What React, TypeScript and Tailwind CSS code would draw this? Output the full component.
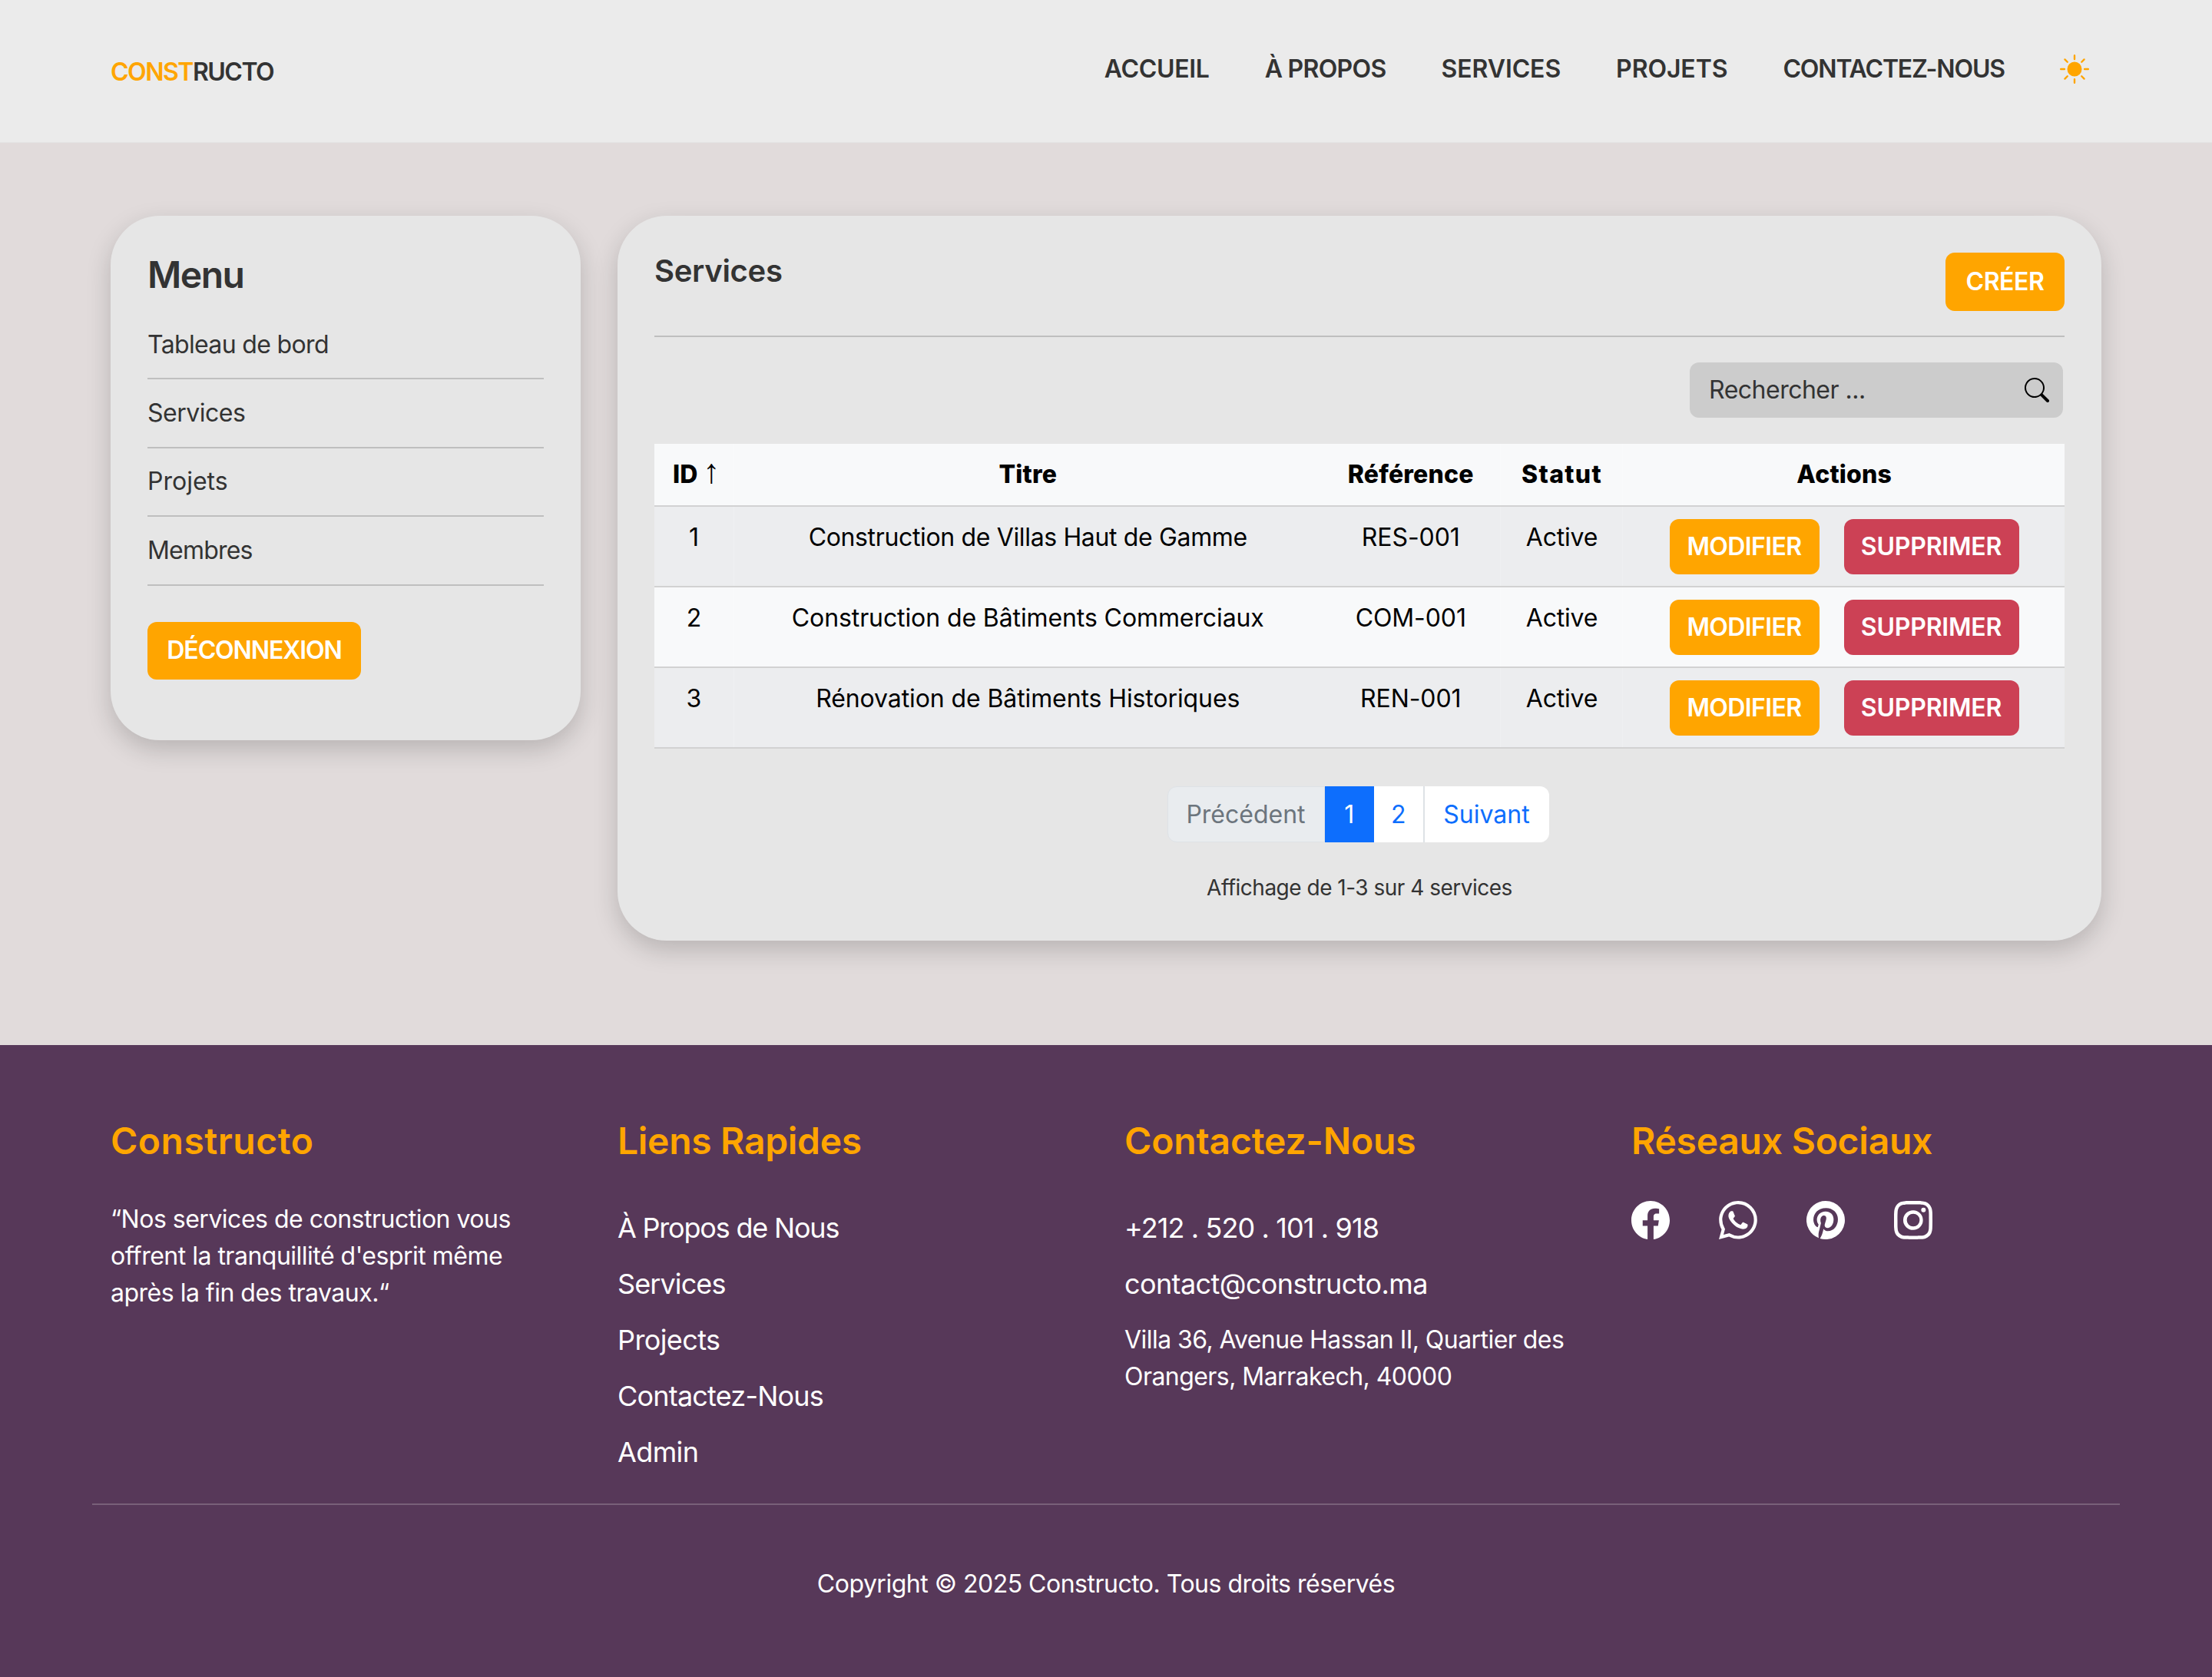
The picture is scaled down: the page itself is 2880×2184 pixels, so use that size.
import { BsFacebook, BsWhatsapp, BsPinterest, BsInstagram, BsSearch, BsSunFill } from "react-icons/bs";

const nav = [
  ["ACCUEIL", "tracking-[-0.3px]"],
  ["À PROPOS", "tracking-[-0.7px]"],
  ["SERVICES", "tracking-[-0.1px]"],
  ["PROJETS", "tracking-[-0.1px]"],
  ["CONTACTEZ-NOUS", "tracking-[-1.15px]"],
];
const menu = [
  ["Tableau de bord", "tracking-[-0.65px]"],
  ["Services", "tracking-[-0.5px]"],
  ["Projets", "tracking-[0px]"],
  ["Membres", "tracking-[-0.8px]"],
];
const rows = [
  ["1", "Construction de Villas Haut de Gamme", "RES-001", "tracking-[-0.35px]"],
  ["2", "Construction de Bâtiments Commerciaux", "COM-001", "tracking-[-0.1px]"],
  ["3", "Rénovation de Bâtiments Historiques", "REN-001", "tracking-[-0.1px]"],
];
const links = [
  ["À Propos de Nous", "tracking-[-1.2px]"],
  ["Services", "tracking-[-0.9px]"],
  ["Projects", "tracking-[-0.6px]"],
  ["Contactez-Nous", "tracking-[-0.8px]"],
  ["Admin", "tracking-[-0.6px]"],
];

function FooterTitle({ children, cls }: { children: React.ReactNode; cls: string }) {
  return <h3 className={`text-[48px] leading-[58px] font-semibold text-[#ffa500] mb-[49px] ${cls}`}>{children}</h3>;
}

export default function App() {
  return (
    <div className="w-[2880px] h-[2184px] flex flex-col bg-[#e1dbdb] text-[#333333] font-['Inter',sans-serif] text-[32px] leading-[48px] tracking-[-0.5px]">
      <header className="h-[186px] shrink-0 bg-[#ebebeb] border-b border-[#e4e4e4] pl-[144px] pr-[160px] flex items-center justify-between">
        <div className="text-[32px] font-semibold tracking-[-1.5px] leading-[40px] mt-[2px]">
          <span className="text-[#ffa500]">CONST</span>RUCTO
        </div>
        <nav className="flex items-center gap-[72px] mb-[6px]">
          {nav.map(([n, t]) => (
            <a key={n} className={`font-semibold text-[32px] whitespace-nowrap ${t}`}>{n}</a>
          ))}
          <BsSunFill className="w-[38px] h-[38px] text-[#ffa500]" />
        </nav>
      </header>

      <main className="flex items-start gap-[48px] pl-[144px] pr-[144px] pt-[95px] h-[1175px] shrink-0">
        <aside className="w-[612px] h-[683px] shrink-0 rounded-[64px] bg-[#e6e6e6] shadow-[0_12px_32px_rgba(0,0,0,0.18)] px-[48px] pt-[48px]">
          <h2 className="text-[48px] font-semibold tracking-[-1.5px] leading-[58px] mb-[18px]">Menu</h2>
          <ul>
            {menu.map(([m, t]) => (
              <li key={m} className={`h-[89.4px] flex items-center border-b-2 border-[#bfbfbf] ${t}`}>{m}</li>
            ))}
          </ul>
          <button className="mt-[47px] h-[75px] w-[278px] rounded-[12px] bg-[#ffa500] text-white font-semibold tracking-[-1.1px] text-[32px]">DÉCONNEXION</button>
        </aside>

        <section className="flex-1 h-[944px] rounded-[64px] bg-[#e6e6e6] shadow-[0_12px_32px_rgba(0,0,0,0.18)] px-[48px] pt-[48px]">
          <div className="flex justify-between items-start h-[110px] border-b-2 border-[#bfbfbf]">
            <h2 className="text-[40px] font-semibold tracking-[-0.3px] leading-[48px]">Services</h2>
            <button className="h-[76px] w-[155px] rounded-[12px] bg-[#ffa500] text-white font-semibold tracking-[-0.4px] text-[32px]">CRÉER</button>
          </div>
          <div className="flex justify-end mt-[33px] mb-[34px]">
            <div className="w-[486px] h-[72px] mr-[2px] rounded-[12px] bg-[#cccccc] pl-[25px] pr-[18px] flex items-center justify-between">
              <span>Rechercher ...</span>
              <BsSearch className="w-[32px] h-[32px] text-black" />
            </div>
          </div>
          <table className="w-full table-fixed border-collapse text-black">
            <colgroup>
              <col className="w-[103px]" />
              <col className="w-[766px]" />
              <col className="w-[232px]" />
              <col className="w-[159px]" />
              <col />
            </colgroup>
            <thead>
              <tr className="bg-[#f8f9fa] border-b-2 border-[#d2d2d2]">
                <th className="h-[81px] pl-[24px] text-left font-extrabold tracking-[0px] whitespace-nowrap">ID <span className="font-normal font-['Liberation_Sans',sans-serif] text-[44px] leading-[32px]">↑</span></th>
                <th className="font-extrabold tracking-[0.2px] border-l border-white/20">Titre</th>
                <th className="font-extrabold tracking-[0.2px]">Référence</th>
                <th className="font-extrabold tracking-[1.3px] border-x border-white/20 pl-[2px]">Statut</th>
                <th className="font-extrabold tracking-[0.2px] pl-[2px]">Actions</th>
              </tr>
            </thead>
            <tbody>
              {rows.map((r, i) => (
                <tr key={r[0]} className={`border-b-2 border-[#d2d2d2] ${i % 2 === 0 ? "bg-[#ecedef]" : "bg-[#f8f9fa]"}`}>
                  <td className="align-top text-center pt-[16px] pb-[15px]">{r[0]}</td>
                  <td className={`align-top text-center pt-[16px] pb-[15px] border-l border-white/20 ${r[3]}`}>{r[1]}</td>
                  <td className="align-top text-center pt-[16px] pb-[15px] tracking-[-0.1px]">{r[2]}</td>
                  <td className="align-top text-center pt-[16px] pb-[15px] pl-[2px] tracking-[-0.2px] border-x border-white/20">Active</td>
                  <td className="align-top pt-[16px] pb-[15px] pl-[61px]">
                    <div className="flex gap-[32px]">
                      <button className="h-[72px] w-[195px] rounded-[12px] bg-[#ffa500] text-white font-semibold tracking-[-0.6px] text-[32px]">MODIFIER</button>
                      <button className="h-[72px] w-[228px] rounded-[12px] bg-[#cc4155] text-white font-semibold tracking-[-0.2px] text-[32px]">SUPPRIMER</button>
                    </div>
                  </td>
                </tr>
              ))}
            </tbody>
          </table>
          <div className="flex justify-center mt-[49px] pr-[4px]">
            <div className="flex h-[73px] items-stretch">
              <span className="w-[205px] flex items-center justify-center bg-[#e9ecef] text-[#6c757d] border border-[#dee2e6] rounded-l-[12px] tracking-[0px]">Précédent</span>
              <span className="w-[64px] flex items-center justify-center bg-[#0d6efd] text-white">1</span>
              <span className="w-[66px] flex items-center justify-center bg-white text-[#0d6efd] border-r-2 border-[#dee2e6]">2</span>
              <span className="w-[162px] flex items-center justify-center bg-white text-[#0d6efd] rounded-r-[12px] tracking-[0px]">Suivant</span>
            </div>
          </div>
          <p className="text-center text-[28px] leading-[42px] mt-[38px]">Affichage de 1-3 sur 4 services</p>
        </section>
      </main>

      <footer className="flex-1 bg-[#573859] text-white px-[120px] pt-[96px] flex flex-col">
        <div className="grid grid-cols-4 h-[503px] border-b-2 border-[#786079]">
          <div className="px-[24px]">
            <FooterTitle cls="tracking-[0.5px]">Constructo</FooterTitle>
            <p className="text-[32px] leading-[48px] w-[580px]">“Nos services de construction vous offrent la tranquillité d'esprit même après la fin des travaux.“</p>
          </div>
          <div className="px-[24px]">
            <FooterTitle cls="tracking-[-0.3px]">Liens Rapides</FooterTitle>
            <ul className="flex flex-col gap-[25px] text-[36px] pt-[11px]">
              {links.map(([l, t]) => <li key={l} className={t}>{l}</li>)}
            </ul>
          </div>
          <div className="px-[24px]">
            <FooterTitle cls="tracking-[-0.15px]">Contactez-Nous</FooterTitle>
            <div className="pt-[11px]">
              <p className="text-[36px] tracking-[-0.9px] mb-[25px]">+212 . 520 . 101 . 918</p>
              <p className="text-[36px] tracking-[-0.6px] mb-[25px]">contact@constructo.ma</p>
              <p className="tracking-[-0.55px]">Villa 36, Avenue Hassan II, Quartier des Orangers, Marrakech, 40000</p>
            </div>
          </div>
          <div className="px-[24px]">
            <FooterTitle cls="tracking-[-0.25px]">Réseaux Sociaux</FooterTitle>
            <div className="flex gap-[64px]">
              <BsFacebook className="w-[50px] h-[50px]" />
              <BsWhatsapp className="w-[50px] h-[50px]" />
              <BsPinterest className="w-[50px] h-[50px]" />
              <BsInstagram className="w-[50px] h-[50px]" />
            </div>
          </div>
        </div>
        <p className="text-center mt-[79px]">Copyright © 2025 Constructo. Tous droits réservés</p>
      </footer>
    </div>
  );
}
